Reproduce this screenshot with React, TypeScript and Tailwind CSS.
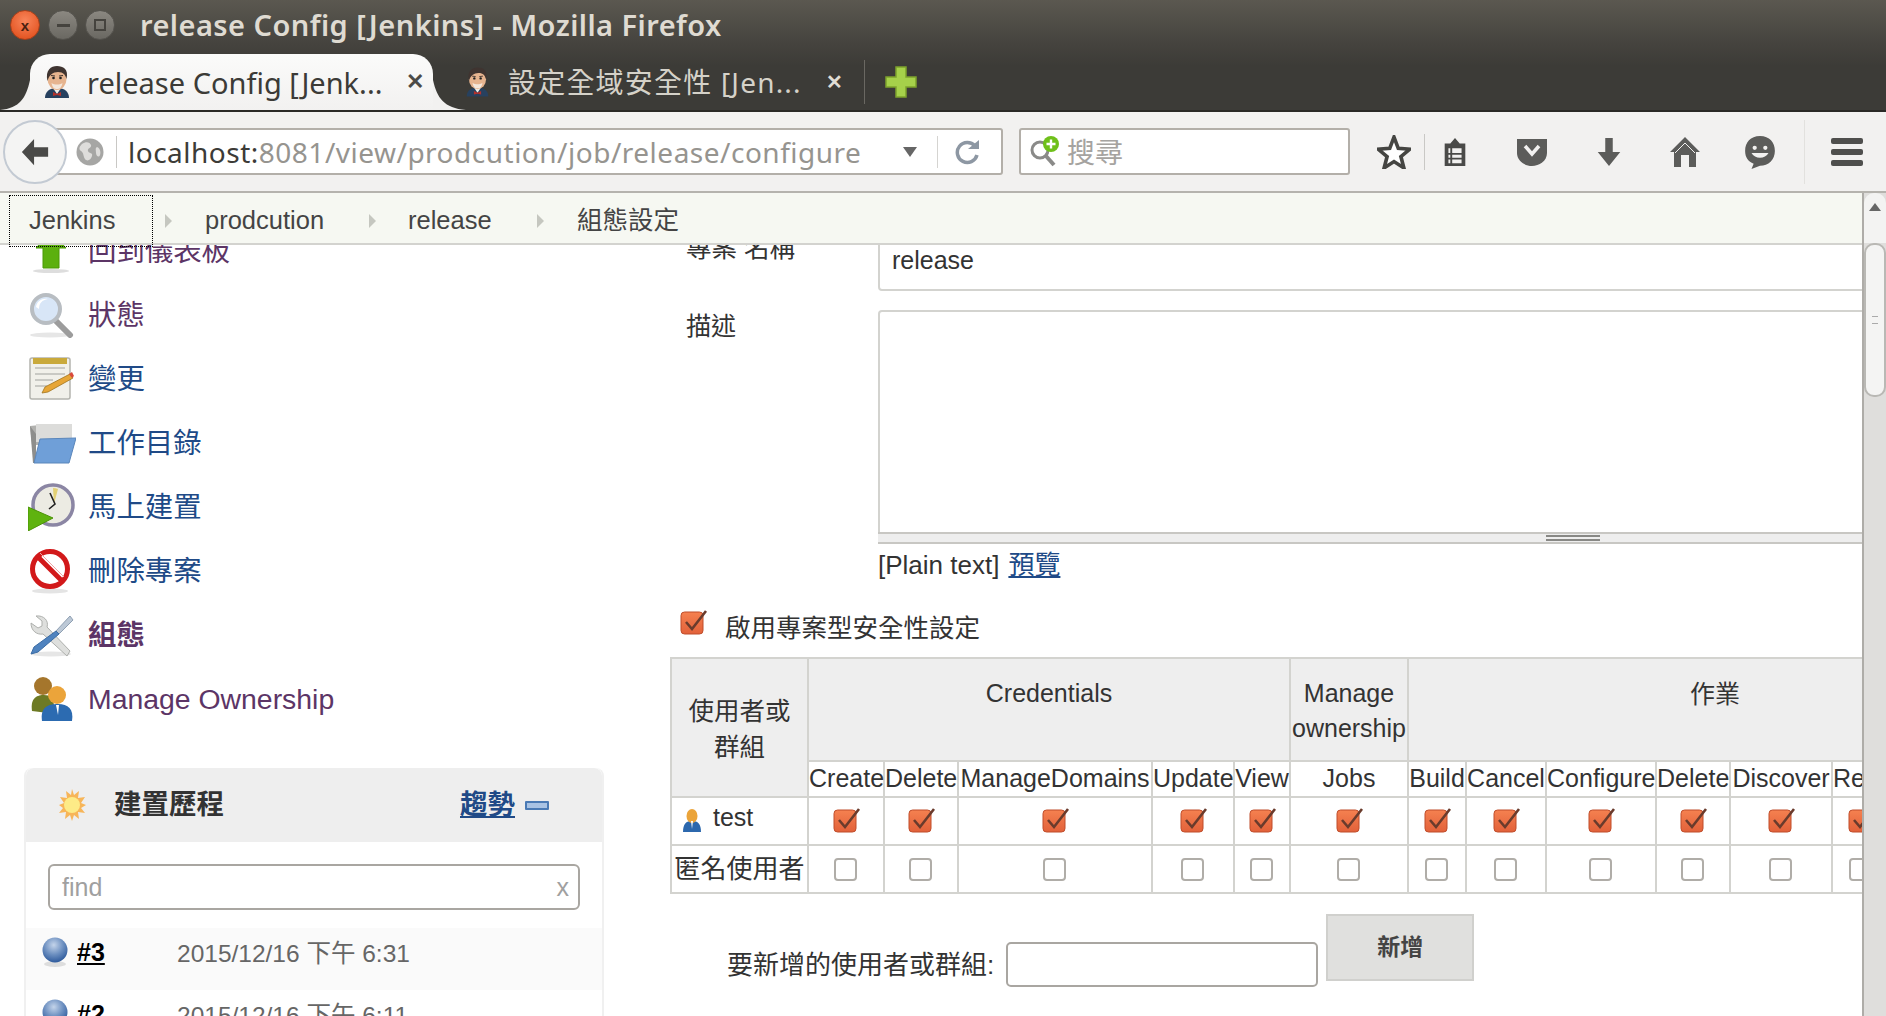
import { ReactNode } from "react";

const FONT = "font-['Liberation_Sans','Noto_Sans_CJK_TC',sans-serif]";
const UI_FONT = "font-['Noto_Sans','Noto_Sans_CJK_TC',sans-serif]";

const Butler = ({ className }: { className: string }) => (
  <svg viewBox="0 0 30 32" className={className}>
    <path d="M3 32c0-6 4-10 12-10s12 4 12 10z" fill="#27415f" />
    <path d="M11 22l4 6 4-6z" fill="#f1efe8" />
    <path d="M11 26l4 2 4-2v4l-4-1-4 1z" fill="#b5312b" />
    <ellipse cx="15" cy="13" rx="9.500" ry="11" fill="#e6b48f" />
    <path d="M5.500 15C3 4 9 0 15 0s12 3 9.500 13c-1-4-3-7-8.500-7-5 0-9 3-10.500 9z" fill="#3f3430" />
    <path d="M9.500 17c3 2 8 2 11 0-1 5-3 6-5.500 6s-4.500-1-5.500-6z" fill="#f3e7dc" />
    <circle cx="11.500" cy="12" r="1.300" fill="#222" />
    <circle cx="18.500" cy="12" r="1.300" fill="#222" />
    <path d="M9 9.500l4 .5M17 10l4-.5" stroke="#3f3430" strokeWidth="1" />
  </svg>
);

const Ball = () => (
  <svg viewBox="0 0 26 30" className="h-[30px] w-[26px] shrink-0">
    <defs>
      <radialGradient id="ball" cx="45%" cy="30%" r="70%">
        <stop offset="0" stopColor="#c4d4ea" />
        <stop offset="0.55" stopColor="#6c8fc0" />
        <stop offset="1" stopColor="#2e5a9c" />
      </radialGradient>
    </defs>
    <ellipse cx="13" cy="27" rx="11" ry="3" fill="#ddd" />
    <circle cx="13" cy="13" r="12.500" fill="url(#ball)" />
  </svg>
);

const UpIcon = () => (
  <svg viewBox="0 0 46 46" className="h-[46px] w-[46px]">
    <path d="M23 4l15 16h-7v20H15V20H8z" fill="#5cb00f" stroke="#4b9a07" />
    <ellipse cx="23" cy="43" rx="18" ry="2" fill="#ddd" />
  </svg>
);

const SearchIcon = () => (
  <svg viewBox="0 0 46 46" className="h-[46px] w-[46px]">
    <ellipse cx="22" cy="43" rx="20" ry="2.500" fill="#e6e6e6" />
    <path d="M28 29l14 14" stroke="#9c9c9c" strokeWidth="6" strokeLinecap="round" />
    <circle cx="18" cy="17" r="14" fill="#d8e6f7" stroke="#b8bdc2" strokeWidth="4" />
    <path d="M8 15c1-6 6-9 12-8-6 1-9 4-9 10z" fill="#fff" />
  </svg>
);

const NotepadIcon = () => (
  <svg viewBox="0 0 46 46" className="h-[46px] w-[46px]">
    <rect x="2" y="2" width="40" height="41" rx="2" fill="#f1f0ea" stroke="#b4b4ae" strokeWidth="1.500" />
    <rect x="5" y="2" width="34" height="6" fill="#c9a93b" />
    <path d="M7 12h30M7 18h30M7 24h18M7 30h12" stroke="#c9c9c4" strokeWidth="2" />
    <path d="M14 37l3-6 25-13 3 4-25 14z" fill="#e7a637" stroke="#a1741c" strokeWidth="0.800" />
    <path d="M41 18l3-2 2 4-2 2z" fill="#d94a3b" />
  </svg>
);

const FolderIcon = () => (
  <svg viewBox="0 0 48 46" className="h-[46px] w-[48px]">
    <path d="M2 6l10-1h31v20H4z" fill="#b1b1ae" />
    <path d="M8 4h36v18H8z" fill="#dcdcda" />
    <path d="M2 6l3 37h3V14z" fill="#8e8e8c" />
    <path d="M12 19l36-1-7 25H6z" fill="#6f9fd8" stroke="#5a86bb" />
  </svg>
);

const BuildIcon = () => (
  <svg viewBox="0 0 48 48" className="h-[48px] w-[48px]">
    <circle cx="25" cy="22" r="20" fill="#ecebe3" stroke="#8b86a4" strokeWidth="3.500" />
    <path d="M25 5a17 17 0 0 1 5 1l-4 15z" fill="#e3d175" />
    <path d="M22 10l5 11-6 5" fill="none" stroke="#222" strokeWidth="1.600" />
    <path d="M0 24l25 11L0 48z" fill="#5fb30f" stroke="#4b9307" />
  </svg>
);

const DeleteIcon = () => (
  <svg viewBox="0 0 46 46" className="h-[46px] w-[46px]">
    <ellipse cx="22" cy="43" rx="18" ry="2.500" fill="#e4e4e4" />
    <circle cx="22" cy="21" r="17.500" fill="#fff" stroke="#d2191a" strokeWidth="5" />
    <path d="M10 9l24 24" stroke="#d2191a" strokeWidth="5" />
    <path d="M12 5l24 24" stroke="#eea5a5" strokeWidth="1" />
  </svg>
);

const ToolsIcon = () => (
  <svg viewBox="0 0 46 46" className="h-[46px] w-[46px]">
    <ellipse cx="23" cy="42" rx="20" ry="2.500" fill="#e6e6e6" />
    <path d="M8 4l6 5v5l-4 2-7-5c0 8 6 12 12 11l24 22 3-5L19 15C21 9 16 3 8 4z" fill="#dedfdd" stroke="#aeb0ad" />
    <path d="M42 4l-14 15 3 3L45 8z" fill="#bcc8d6" stroke="#8fa0b3" />
    <path d="M28 19L6 35l-3 7 7-2 21-18z" fill="#4f83bf" stroke="#3a6ba3" />
  </svg>
);

const PeopleIcon = () => (
  <svg viewBox="0 0 46 48" className="h-[48px] w-[46px]">
    <path d="M4 36c-2-14 6-16 12-16s10 3 10 12l-6 6z" fill="#6d7a24" />
    <circle cx="15" cy="11" r="9" fill="#a5762c" />
    <path d="M14 46c-2-14 6-17 16-17s16 5 14 17z" fill="#2c6bb1" />
    <circle cx="29" cy="20" r="9" fill="#eba43a" />
    <path d="M28 30h3l-1 10z" fill="#fff" />
  </svg>
);

const SideLink = ({
  icon,
  label,
  visited,
  bold,
}: {
  icon: ReactNode;
  label: string;
  visited?: boolean;
  bold?: boolean;
}) => (
  <div className="flex h-16 items-center pl-[28px]">
    <span className="flex w-[60px] shrink-0">{icon}</span>
    <span
      className={`text-[28.4px] leading-none ${visited ? "text-[#5c3566]" : "text-[#204a87]"} ${bold ? "font-bold" : ""}`}
    >
      {label}
    </span>
  </div>
);

const Check = ({ on, className = "" }: { on?: boolean; className?: string }) =>
  on ? (
    <svg viewBox="0 0 28 25" className={`inline-block h-[25px] w-[28px] align-middle ${className}`}>
      <defs>
        <linearGradient id="chk" x1="0" y1="0" x2="0" y2="1">
          <stop offset="0" stopColor="#f58150" />
          <stop offset="1" stopColor="#e2613a" />
        </linearGradient>
      </defs>
      <rect x="1" y="2" width="22" height="22" rx="3.500" fill="url(#chk)" stroke="#bf4d2b" />
      <path d="M6 12l6 7L26 1" fill="none" stroke="#6a3b2c" strokeWidth="2.600" />
    </svg>
  ) : (
    <span className={`inline-block h-[23px] w-[23px] rounded-[4px] border-2 border-[#b0ada8] bg-white align-middle ${className}`} />
  );

const ToolIcon = ({ children, className }: { children: ReactNode; className: string }) => (
  <svg viewBox="0 0 32 32" className={className}>
    {children}
  </svg>
);

const columns = [137, 76, 74, 194, 82, 56, 118, 58, 80, 110, 74, 102, 58];
const subHeads = [
  "Create",
  "Delete",
  "ManageDomains",
  "Update",
  "View",
  "Jobs",
  "Build",
  "Cancel",
  "Configure",
  "Delete",
  "Discover",
  "Read",
];

export default function App() {
  return (
    <div className={`flex h-screen w-full flex-col overflow-hidden bg-white ${FONT}`}>
      {/* window title + tabs */}
      <div className="h-[112px] shrink-0 border-b-2 border-[#2a2926] bg-[linear-gradient(#5b5850,#45433e_40%,#3c3b37_60%)]">
        <div className="flex h-[50px] items-center pl-[10px]">
          <span className="flex h-[30px] w-[30px] items-center justify-center rounded-full border border-[#a8401a] bg-[radial-gradient(circle_at_50%_35%,#f9855a,#dd4814)] text-[15px] font-bold leading-none text-[#4a2010]">
            x
          </span>
          <span className="ml-[8px] flex h-[30px] w-[30px] items-center justify-center rounded-full border border-[#55534e] bg-[linear-gradient(#8b8881,#6a6862)]">
            <span className="h-[3px] w-[13px] bg-[#45433e]" />
          </span>
          <span className="ml-[7px] flex h-[30px] w-[30px] items-center justify-center rounded-full border border-[#55534e] bg-[linear-gradient(#8b8881,#6a6862)]">
            <span className="h-[12px] w-[12px] border-2 border-[#45433e]" />
          </span>
          <span className={`ml-[25px] whitespace-nowrap text-[29px] font-semibold tracking-[0.45px] text-[#dfdbd2] ${UI_FONT}`}>
            release Config [Jenkins] - Mozilla Firefox
          </span>
        </div>
        <div className="flex h-[60px] items-end">
          <div className="relative ml-[30px] flex h-[56px] w-[403px] items-center rounded-t-[20px] bg-[linear-gradient(#fbfbfa,#f2f1f0)] pl-[12px]">
            <svg viewBox="0 0 30 30" className="absolute bottom-0 left-[-30px] h-[30px] w-[30px]">
              <path d="M30 0C26 18 20 28 0 30h30z" fill="#f2f1f0" />
            </svg>
            <svg viewBox="0 0 33 30" className="absolute bottom-0 right-[-33px] h-[30px] w-[33px]">
              <path d="M0 0c4 18 11 28 33 30H0z" fill="#f2f1f0" />
            </svg>
            <Butler className="h-[32px] w-[30px] shrink-0" />
            <span className={`ml-[15px] w-[295px] whitespace-nowrap text-[29px] leading-none text-[#3c3b37] ${UI_FONT}`}>
              release Config [Jenk...
            </span>
            <span className="ml-[24px] text-[22px] font-bold leading-none text-[#4c4b47]">✕</span>
          </div>
          <div className="ml-[31px] flex h-[56px] items-center">
            <Butler className="h-[32px] w-[27px] shrink-0" />
            <span className={`ml-[17px] w-[300px] whitespace-nowrap text-[28px] leading-none tracking-[1.2px] text-[#d5d2c9] ${UI_FONT}`}>
              設定全域安全性 [Jen...
            </span>
            <span className="ml-[18px] text-[20px] font-bold leading-none text-[#e0ddd5]">✕</span>
            <span className="ml-[21px] h-[44px] w-px bg-[#6a6862]" />
            <svg viewBox="0 0 32 32" className="ml-[20px] h-[32px] w-[32px]">
              <path d="M11 1h10v10h10v10H21v10H11V21H1V11h10z" fill="#a6d14a" stroke="#7da22c" strokeWidth="1.500" />
            </svg>
          </div>
        </div>
      </div>

      {/* navigation bar */}
      <div className="flex h-[81px] shrink-0 items-center border-b-2 border-[#b5b3ae] bg-[#f2f1f0]">
        <div className="relative z-10 ml-[3px] flex h-[64px] w-[64px] shrink-0 items-center justify-center rounded-full border-2 border-[#c3cad3] bg-[#f4f4f3]">
          <svg viewBox="0 0 32 32" className="h-[32px] w-[30px]">
            <path d="M15 2L2 16l13 14v-9h15V11H15z" fill="#4a4a48" />
          </svg>
        </div>
        <div className="-ml-[12px] flex h-[47px] w-[948px] shrink-0 items-center rounded-r-[3px] border-2 border-[#b3afa9] bg-white">
          <svg viewBox="0 0 28 28" className="ml-[19px] h-[28px] w-[28px] shrink-0">
            <circle cx="14" cy="14" r="13.500" fill="#a6a6a4" />
            <path d="M6 6c4-3 8-2 9 1s-4 3-3 6 5 1 4 5-5 6-7 3-1-6-4-8-1-5 1-7zM21 9c3 1 4 5 3 8s-4 1-4-2-1-5 1-6z" fill="#dedddb" />
          </svg>
          <span className="ml-[12px] h-[32px] w-px shrink-0 bg-[#c9c8c5]" />
          <span className={`ml-[11px] w-[775px] whitespace-nowrap text-[28px] leading-none tracking-[0.5px] text-[#96948f] ${UI_FONT}`}>
            <span className="text-[#3c3b37]">localhost:</span>8081/view/prodcution/job/release/configure
          </span>
          <span className="h-0 w-0 border-x-[7px] border-t-[10px] border-x-transparent border-t-[#666]" />
          <span className="ml-[20px] h-[32px] w-px shrink-0 bg-[#d5d4d1]" />
          <svg viewBox="0 0 26 26" className="ml-[17px] h-[26px] w-[26px] shrink-0">
            <path d="M20 7A10 10 0 1 0 22 16" fill="none" stroke="#8d97a3" strokeWidth="3.500" />
            <path d="M13 10h11V1z" fill="#8d97a3" />
          </svg>
        </div>
        <div className="ml-[16px] flex h-[47px] w-[331px] shrink-0 items-center rounded-[3px] border-2 border-[#b3afa9] bg-white pl-[8px]">
          <svg viewBox="0 0 32 32" className="h-[32px] w-[32px] shrink-0">
            <circle cx="11" cy="14" r="8" fill="none" stroke="#8a8a88" strokeWidth="3" />
            <path d="M17 20l8 9" stroke="#8a8a88" strokeWidth="4" />
            <circle cx="22" cy="8" r="8" fill="#6fc01a" />
            <path d="M22 3.500v9M17.500 8h9" stroke="#fff" strokeWidth="2.400" />
          </svg>
          <span className="ml-[6px] mt-[4px] text-[28px] leading-none text-[#a5a3a0]">搜尋</span>
        </div>
        <ToolIcon className="ml-[27px] h-[34px] w-[34px] shrink-0">
          <path d="M16 2l4 10.500 11 .8-8.500 7 2.800 10.700L16 25l-9.300 6L9.500 20.300 1 13.300l11-.8z" fill="#fff" stroke="#454542" strokeWidth="3.400" />
        </ToolIcon>
        <span className="ml-[13px] h-[36px] w-px shrink-0 bg-[#c9c8c5]" />
        <ToolIcon className="ml-[15px] h-[32px] w-[30px] shrink-0">
          <path d="M16 1l5 6h6v24H5V7h6z" fill="#4a4a48" />
          <path d="M9 12h14v5H9zM9 19h14v3H9zM9 24h14v4H9z" fill="#f2f1f0" />
          <path d="M12 11v18" stroke="#4a4a48" strokeWidth="2" />
        </ToolIcon>
        <ToolIcon className="ml-[45px] h-[32px] w-[34px] shrink-0">
          <path d="M1 3h30v14c0 8-8 13-15 13S1 25 1 17z" fill="#5c5c5a" />
          <path d="M9 10l7 8 7-8" fill="none" stroke="#f2f1f0" strokeWidth="3.500" />
        </ToolIcon>
        <ToolIcon className="ml-[45px] h-[32px] w-[30px] shrink-0">
          <path d="M12 1h8v15h8L16 31 4 16h8z" fill="#5c5c5a" />
        </ToolIcon>
        <ToolIcon className="ml-[44px] h-[32px] w-[34px] shrink-0">
          <path d="M16 1l15 15h-4v15h-7V19h-8v12H5V16H1z" fill="#5c5c5a" />
          <path d="M16 7L6 17" stroke="#f2f1f0" strokeWidth="1" />
          <path d="M16 7l10 10" stroke="#f2f1f0" strokeWidth="1" />
        </ToolIcon>
        <ToolIcon className="ml-[41px] h-[34px] w-[34px] shrink-0">
          <path d="M16 1c9 0 14 6 14 14s-6 14-14 14l-8 3 2-5C5 25 2 21 2 15 2 7 7 1 16 1z" fill="#5c5c5a" />
          <circle cx="11" cy="12" r="2" fill="#f2f1f0" />
          <circle cx="21" cy="12" r="2" fill="#f2f1f0" />
          <path d="M8 17c3 6 13 6 16 0z" fill="#f2f1f0" />
        </ToolIcon>
        <span className="ml-[27px] h-[64px] w-px shrink-0 bg-[#e2e1de]" />
        <div className="ml-[26px] flex w-[32px] shrink-0 flex-col gap-[5px]">
          <span className="h-[6px] rounded-[2px] bg-[#4f4f4d]" />
          <span className="h-[6px] rounded-[2px] bg-[#4f4f4d]" />
          <span className="h-[6px] rounded-[2px] bg-[#4f4f4d]" />
        </div>
      </div>

      {/* page */}
      <div className="flex min-h-0 flex-1">
        <div className="flex min-w-0 flex-1 flex-col overflow-hidden">
          <div className="relative z-10 flex h-[52px] shrink-0 items-center border-b-2 border-[#d3d3cf] bg-[#f6f8f2] pt-[6px] text-[25.5px] leading-none text-[#444]">
            <span className="absolute left-[9px] top-[2px] h-[52px] w-[144px] border border-dotted border-black" />
            <span className="ml-[29px] w-[136px]">Jenkins</span>
            <Crumb />
            <span className="ml-[33px] w-[164px]">prodcution</span>
            <Crumb />
            <span className="ml-[32px] w-[129px]">release</span>
            <Crumb />
            <span className="ml-[33px]">組態設定</span>
          </div>

          <div className="flex min-h-0 flex-1">
            {/* side panel */}
            <div className="-mt-[26px] w-[670px] shrink-0">
              <SideLink icon={<UpIcon />} label="回到儀表板" visited />
              <SideLink icon={<SearchIcon />} label="狀態" visited />
              <SideLink icon={<NotepadIcon />} label="變更" />
              <SideLink icon={<FolderIcon />} label="工作目錄" />
              <SideLink icon={<BuildIcon />} label="馬上建置" />
              <SideLink icon={<DeleteIcon />} label="刪除專案" />
              <SideLink icon={<ToolsIcon />} label="組態" visited bold />
              <SideLink icon={<PeopleIcon />} label="Manage Ownership" visited />

              <div className="ml-[24px] mt-[37px] w-[580px] rounded-t-[8px] border-x-2 border-[#f0f0f0]">
                <div className="flex h-[74px] items-center rounded-t-[8px] bg-[#eeeeee] pl-[32px]">
                  <svg viewBox="0 0 28 32" className="h-[32px] w-[28px]">
                    <path d="M14 0l2 6 5-4-1 7 7-1-4 6 5 2-5 3 4 5-7-1 1 7-5-4-2 6-2-6-5 4 1-7-7 1 4-5-4-3 5-2-4-6 7 1-1-7 5 4z" fill="#f7b558" />
                    <circle cx="14" cy="16" r="8" fill="#fdeb87" />
                  </svg>
                  <span className="ml-[28px] w-[346px] text-[27.5px] font-bold leading-none text-[#333]">建置歷程</span>
                  <span className="text-[27.5px] font-bold leading-none text-[#204a87] underline">趨勢</span>
                  <span className="ml-[10px] h-[9px] w-[24px] rounded-[1px] border-2 border-[#4a7ab5] bg-[#a9c3e4]" />
                </div>
                <div className="bg-white px-[22px] pb-[18px] pt-[22px]">
                  <div className="flex h-[46px] items-center justify-between rounded-[6px] border-2 border-[#a9a6a1] pl-[12px] pr-[9px] text-[25px] leading-none text-[#a0a0a0]">
                    <span>find</span>
                    <span>x</span>
                  </div>
                </div>
                <HistoryRow id="#3" date="2015/12/16 下午 6:31" stripe />
                <HistoryRow id="#2" date="2015/12/16 下午 6:11" />
              </div>
            </div>

            {/* config form */}
            <div className="min-w-0 flex-1 overflow-hidden text-[25px] leading-none text-[#333]">
              <div className="-mt-[16px] flex items-center">
                <span className="ml-[16px] -mt-[22px] w-[192px] shrink-0 text-[25.5px]">專案 名稱</span>
                <div className="flex h-[62px] w-[1100px] shrink-0 items-center rounded-[4px] border-2 border-[#d3d3cf] pl-[12px]">release</div>
              </div>
              <div className="mt-[19px] flex items-start">
                <span className="ml-[16px] mt-[4px] w-[192px] shrink-0">描述</span>
                <div className="w-[1100px] shrink-0">
                  <div className="h-[222px] rounded-tl-[4px] border-2 border-b-0 border-[#d3d3cf]" />
                  <div className="flex h-[12px] justify-center border-y-2 border-[#c8c7c3] bg-[#eeeeee]">
                    <div className="mt-[1px] ml-[290px] h-[6px] w-[54px] border-y-2 border-[#888885]" />
                  </div>
                </div>
              </div>
              <div className="ml-[208px] mt-[8px] flex h-[25px] items-center text-[26px]">
                [Plain text]
                <span className="ml-[9px] text-[#204a87] underline">預覽</span>
              </div>
              <div className="mt-[39px] flex items-center pl-[10px]">
                <Check on className="-mt-[12px]" />
                <span className="ml-[17px] text-[25.5px]">啟用專案型安全性設定</span>
              </div>

              <table className="mt-[15px] table-fixed border-collapse border-2 border-[#d3d3cf] text-center" style={{ width: 1219 }}>
                <colgroup>
                  {columns.map((w, i) => (
                    <col key={i} style={{ width: w }} />
                  ))}
                </colgroup>
                <thead>
                  <tr className="h-[103px] bg-[#eeeeee] font-normal">
                    <th rowSpan={2} className="border-2 border-[#d3d3cf] pt-[4px] text-[25.5px] font-normal leading-[36px]">
                      使用者或
                      <br />
                      群組
                    </th>
                    <th colSpan={5} className="border-2 border-[#d3d3cf] pt-[22px] align-top font-normal">
                      Credentials
                    </th>
                    <th className="whitespace-nowrap border-2 border-[#d3d3cf] p-0 pt-[17px] align-top font-normal leading-[35px]">
                      Manage
                      <br />
                      ownership
                    </th>
                    <th colSpan={7} className="border-2 border-[#d3d3cf] pl-[132px] pt-[23px] align-top font-normal">
                      作業
                    </th>
                  </tr>
                  <tr className="h-[36px]">
                    {subHeads.map((h, i) => (
                      <th key={i} className="whitespace-nowrap border-2 border-[#d3d3cf] p-0 font-normal">
                        {h}
                      </th>
                    ))}
                  </tr>
                </thead>
                <tbody>
                  <tr className="h-[48px]">
                    <td className="border-2 border-[#d3d3cf] text-left">
                      <span className="flex items-center pl-[10px]">
                        <svg viewBox="0 0 20 24" className="h-[24px] w-[20px] shrink-0">
                          <path d="M1 23c0-8 3-11 9-11s9 3 9 11z" fill="#2c68ad" />
                          <ellipse cx="10" cy="7" rx="5.500" ry="7" fill="#eba43a" />
                          <path d="M9 12h2l-1 8z" fill="#fff" />
                        </svg>
                        <span className="ml-[11px] -mt-[6px]">test</span>
                      </span>
                    </td>
                    {subHeads.map((h, i) => (
                      <td key={i} className="border-2 border-[#d3d3cf] p-0">
                        <Check on className="-mt-[2px] ml-[2px]" />
                      </td>
                    ))}
                  </tr>
                  <tr className="h-[48px]">
                    <td className="whitespace-nowrap border-2 border-[#d3d3cf] p-0 text-center text-[26px]">匿名使用者</td>
                    {subHeads.map((h, i) => (
                      <td key={i} className="border-2 border-[#d3d3cf] p-0">
                        <Check className="-mt-[2px] -ml-[1px]" />
                      </td>
                    ))}
                  </tr>
                </tbody>
              </table>

              <div className="mt-[20px] flex items-start">
                <span className="ml-[57px] mt-[38px] whitespace-nowrap text-[26px]">要新增的使用者或群組:</span>
                <div className="ml-[12px] mt-[28px] h-[45px] w-[312px] rounded-[5px] border-2 border-[#a9a6a1]" />
                <div className="ml-[8px] flex h-[67px] w-[148px] items-center justify-center border-2 border-[#d0d0cd] bg-[#e0e0de] text-[23px] font-bold text-[#444]">
                  新增
                </div>
              </div>
            </div>
          </div>
        </div>

        {/* scrollbar */}
        <div className="flex w-[24px] shrink-0 flex-col border-l-2 border-[#aeaca8] bg-[#dfdedc]">
          <div className="flex h-[50px] justify-center rounded-t-[10px] bg-[#f3f3f2] pt-[10px]">
            <span className="h-0 w-0 border-x-[6px] border-b-[8px] border-x-transparent border-b-[#666]" />
          </div>
          <div className="flex h-[154px] items-center justify-center rounded-[10px] border-2 border-[#b9b8b4] bg-[#f4f4f3]">
            <span className="h-[8px] w-[6px] border-y border-[#aaa]" />
          </div>
        </div>
      </div>
    </div>
  );
}

function Crumb() {
  return <span className="h-0 w-0 border-y-[7px] border-l-[7px] border-y-transparent border-l-[#c5c7c0]" />;
}

function HistoryRow({ id, date, stripe }: { id: string; date: string; stripe?: boolean }) {
  return (
    <div className={`flex h-[62px] items-start pl-[16px] pt-[9px] ${stripe ? "bg-[#fafafa]" : "bg-white"}`}>
      <Ball />
      <span className="ml-[9px] w-[100px] text-[25px] font-bold leading-[30px] text-black underline">{id}</span>
      <span className="text-[24.5px] leading-[34px] text-[#666]">{date}</span>
    </div>
  );
}
